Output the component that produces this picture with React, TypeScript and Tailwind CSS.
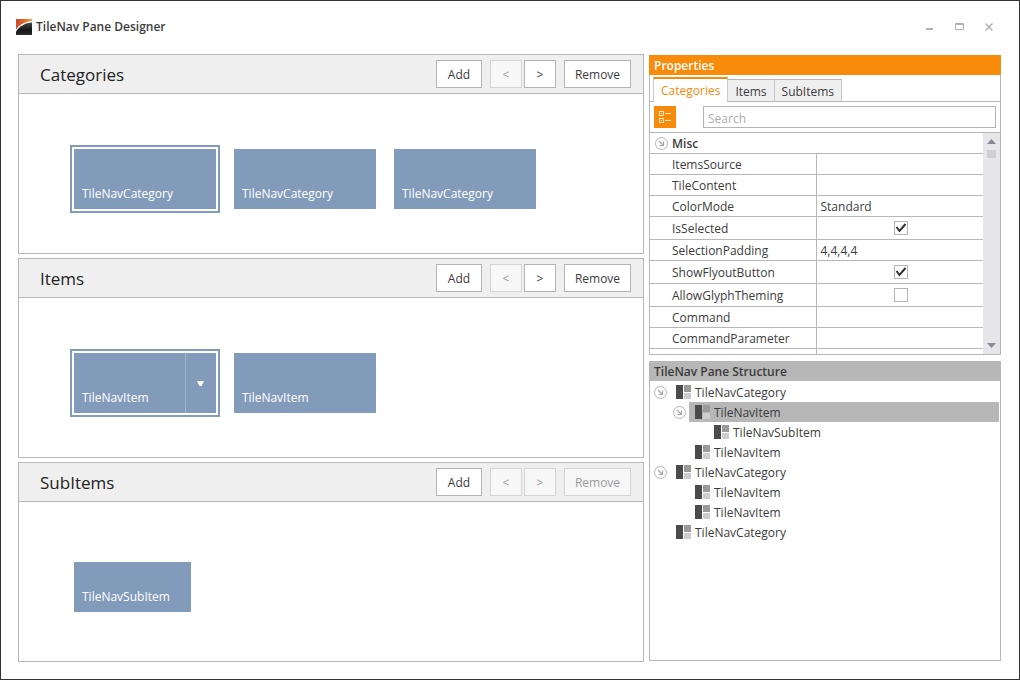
import { useState } from 'react'
import clsx from 'clsx'

interface Section {
  title: string
  tiles: string[]
  small?: boolean
  selected?: number
  flyout?: boolean
  canMoveForward: boolean
  canRemove: boolean
}

interface Property {
  name: string
  value?: string | boolean
}

interface Node {
  label: string
  children?: Node[]
  selected?: boolean
}

const sections: Section[] = [
  {
    title: 'Categories',
    tiles: ['TileNavCategory', 'TileNavCategory', 'TileNavCategory'],
    selected: 0,
    canMoveForward: true,
    canRemove: true,
  },
  {
    title: 'Items',
    tiles: ['TileNavItem', 'TileNavItem'],
    selected: 0,
    flyout: true,
    canMoveForward: true,
    canRemove: true,
  },
  {
    title: 'SubItems',
    tiles: ['TileNavSubItem'],
    small: true,
    canMoveForward: false,
    canRemove: false,
  },
]

const properties: Property[] = [
  { name: 'ItemsSource' },
  { name: 'TileContent' },
  { name: 'ColorMode', value: 'Standard' },
  { name: 'IsSelected', value: true },
  { name: 'SelectionPadding', value: '4,4,4,4' },
  { name: 'ShowFlyoutButton', value: true },
  { name: 'AllowGlyphTheming', value: false },
  { name: 'Command' },
  { name: 'CommandParameter' },
  { name: '' },
]

const structure: Node[] = [
  {
    label: 'TileNavCategory',
    children: [
      { label: 'TileNavItem', selected: true, children: [{ label: 'TileNavSubItem' }] },
      { label: 'TileNavItem' },
    ],
  },
  {
    label: 'TileNavCategory',
    children: [{ label: 'TileNavItem' }, { label: 'TileNavItem' }],
  },
  { label: 'TileNavCategory' },
]

const tabs = ['Categories', 'Items', 'SubItems']

function Logo() {
  return (
    <svg className="h-4 w-4" viewBox="0 0 16 16">
      <defs>
        <linearGradient id="logo-sky" x1="0" y1="0" x2="1" y2="0">
          <stop offset="0" stopColor="#c9472b" />
          <stop offset="0.5" stopColor="#e2682c" />
          <stop offset="1" stopColor="#f9a33c" />
        </linearGradient>
        <linearGradient id="logo-globe" x1="0" y1="0" x2="0" y2="1">
          <stop offset="0" stopColor="#4a4a4a" />
          <stop offset="0.6" stopColor="#151515" />
          <stop offset="1" stopColor="#2e2e2e" />
        </linearGradient>
      </defs>
      <rect width="16" height="16" fill="url(#logo-sky)" />
      <path d="M0 10.500C3 6 9 2.500 16 2V16H0Z" fill="#fff" />
      <path d="M0 12.500C4 7 9 4 16 3.500V16H0Z" fill="url(#logo-globe)" />
    </svg>
  )
}

function Expander() {
  return (
    <svg className="h-[13px] w-[13px]" viewBox="0 0 13 13" fill="none">
      <circle cx="6.500" cy="6.500" r="6" stroke="#b4b4b4" />
      <path d="M4 4L8.500 8.500M8.500 4.500V8.500H4.500" stroke="#a6a6a6" strokeWidth="1.200" />
    </svg>
  )
}

function TileIcon() {
  return (
    <svg className="h-[14px] w-[15px] shrink-0" viewBox="0 0 15 14" shapeRendering="crispEdges">
      <path d="M0 0H7V14H0Z" fill="#4b4b4b" />
      <path d="M8 0H15V7H8Z" fill="#9a9a9a" />
      <path d="M8 8H15V14H8Z" fill="#cdcdcd" />
    </svg>
  )
}

function ToolButton({ label, className, disabled }: { label: string; className: string; disabled?: boolean }) {
  return (
    <button
      disabled={disabled}
      className={clsx(
        'h-7 border pt-0.5',
        disabled ? 'border-[#d4d4d4] bg-[#f7f7f7] text-[#9b9b9b]' : 'border-[#b4b4b4] bg-white',
        className,
      )}
    >
      {label}
    </button>
  )
}

function SectionPanel({ section }: { section: Section }) {
  return (
    <section className="flex flex-1 flex-col border border-[#b7b7b7]">
      <header className="flex h-[39px] items-center border-b border-[#b7b7b7] bg-[#efefef] pr-3 pl-[21px]">
        <h2 className="flex-1 pt-0.5 text-[17px] text-[#222]">{section.title}</h2>
        <ToolButton label="Add" className="mr-2 w-[46px]" />
        <ToolButton label="<" className="mr-0.5 w-8" disabled />
        <ToolButton label=">" className="mr-2 w-8" disabled={!section.canMoveForward} />
        <ToolButton label="Remove" className="w-[67px]" disabled={!section.canRemove} />
      </header>
      <div className="flex flex-1 items-center gap-[18px] pt-[11px] pl-[55px]">
        {section.tiles.map((tile, index) => (
          <div
            key={index}
            className={clsx(
              'flex bg-[#839bba] text-white',
              section.small ? 'h-[50px] w-[117px]' : 'h-[60px] w-[142px]',
              section.selected === index && 'outline-2 outline-offset-2 outline-[#839bba]',
            )}
          >
            <button className="flex flex-1 items-end px-2 pb-[7px] leading-4">{tile}</button>
            {section.flyout && section.selected === index && (
              <button
                aria-label="Open flyout"
                className="flex w-[31px] items-center justify-center border-l border-[#a3b4cc] pr-0.5"
              >
                <svg className="h-[5px] w-[7px]" viewBox="0 0 7 5" fill="#fff">
                  <path d="M0 0H7L4.500 5H2.500Z" />
                </svg>
              </button>
            )}
          </div>
        ))}
      </div>
    </section>
  )
}

function PropertyValue({ property }: { property: Property }) {
  const [checked, setChecked] = useState(property.value === true)

  if (typeof property.value !== 'boolean') {
    return <>{property.value}</>
  }
  return (
    <label className="mx-auto grid h-[14px] w-[14px]">
      <input
        type="checkbox"
        aria-label={property.name}
        checked={checked}
        onChange={() => setChecked(!checked)}
        className="col-start-1 row-start-1 h-[14px] w-[14px] appearance-none border border-[#b4b4b4] bg-white"
      />
      {checked && (
        <svg className="pointer-events-none col-start-1 row-start-1 h-[14px] w-[14px]" viewBox="0 0 14 14" fill="none">
          <path d="M2.500 6L5.500 10L11.500 3" stroke="#333" strokeWidth="2" />
        </svg>
      )}
    </label>
  )
}

function PropertyGrid() {
  return (
    <div className="flex min-h-0 flex-1 border-t border-[#b7b7b7]">
      <div className="min-w-0 flex-1 overflow-hidden">
        <table className="w-full table-fixed border-separate border-spacing-0 leading-4">
          <thead>
            <tr className="h-[21px]">
              <th colSpan={2} className="border-b border-[#b7b7b7] p-0 text-left font-semibold">
                <div className="flex items-center gap-1 pl-[5px]">
                  <Expander />
                  <span className="pt-0.5">Misc</span>
                </div>
              </th>
            </tr>
          </thead>
          <tbody>
            {properties.map((property, index) => (
              <tr key={index} className={typeof property.value === 'boolean' ? 'h-[23px]' : 'h-[21px]'}>
                <td className="border-r border-b border-[#b7b7b7] p-0 pt-0.5 pl-[22px]">{property.name}</td>
                <td
                  className={clsx(
                    'border-b border-[#b7b7b7] p-0',
                    typeof property.value === 'boolean' ? 'pl-0.5' : 'pt-0.5 pl-1',
                  )}
                >
                  <PropertyValue property={property} />
                </td>
              </tr>
            ))}
          </tbody>
        </table>
      </div>
      <div className="flex w-[17px] flex-col items-center bg-[#e6e6eb] py-1.5">
        <svg className="h-[5px] w-[9px]" viewBox="0 0 9 5" fill="#868999">
          <path d="M0 5L4.500 0L9 5Z" />
        </svg>
        <div className="mt-1.5 h-2 w-[9px] bg-[#cfcfd4]" />
        <svg className="mt-auto h-[5px] w-[9px]" viewBox="0 0 9 5" fill="#868999">
          <path d="M0 0L4.500 5L9 0Z" />
        </svg>
      </div>
    </div>
  )
}

function PropertiesPanel() {
  const [activeTab, setActiveTab] = useState('Categories')

  return (
    <section className="flex min-h-0 flex-1 flex-col border border-t-0 border-[#b7b7b7]">
      <h2 className="-mx-px h-5 bg-[#f88b0a] pt-px pl-[5px] leading-5 font-semibold text-white">Properties</h2>
      <div className="flex h-[27px] items-end border-b border-[#b7b7b7] pl-[3px]">
        {tabs.map((tab) => (
          <button
            key={tab}
            onClick={() => setActiveTab(tab)}
            className={clsx(
              'border-r border-[#c9c9c9] px-[7px]',
              tab === activeTab
                ? '-mb-px h-[25px] border-t-2 border-l border-t-[#f88b0a] bg-white text-[#f88b0a]'
                : 'h-[22px] border-t border-t-[#b7b7b7] bg-[#efefef] pt-0.5',
            )}
          >
            {tab}
          </button>
        ))}
      </div>
      <div className="flex h-[30px] items-center justify-between pr-1 pl-1">
        <button aria-label="Group by category" className="flex h-[22px] w-[22px] items-center justify-center bg-[#f88b0a]">
          <svg className="h-3 w-3" viewBox="0 0 12 12" fill="none" stroke="#fde3bf" shapeRendering="crispEdges">
            <path d="M0.500 0.500H4.500V4.500H0.500ZM0.500 7.500H4.500V11.500H0.500Z" />
            <path d="M2 2.500H3M2 9.500H3M6 2.500H12M6 9.500H12" />
          </svg>
        </button>
        <input
          type="search"
          aria-label="Search"
          placeholder="Search"
          className="ml-[27px] h-[22px] min-w-0 flex-1 border border-[#b4b4b4] px-1 pt-0.5 outline-none placeholder:text-[#adadad]"
        />
      </div>
      <PropertyGrid />
    </section>
  )
}

function TreeRows({ nodes, level = 0 }: { nodes: Node[]; level?: number }) {
  return (
    <ul className={level > 0 ? 'pl-[19px]' : undefined}>
      {nodes.map((node, index) => (
        <li key={index}>
          <div className="flex h-5 items-center">
            <div className="w-5 shrink-0">
              {node.children && (
                <button aria-label="Collapse" className="block">
                  <Expander />
                </button>
              )}
            </div>
            <div className={clsx('-ml-1 mr-px flex h-5 flex-1 items-center gap-1 pl-1.5', node.selected && 'bg-[#b7b7b7]')}>
              <TileIcon />
              <span className="pt-0.5">{node.label}</span>
            </div>
          </div>
          {node.children && <TreeRows nodes={node.children} level={level + 1} />}
        </li>
      ))}
    </ul>
  )
}

function StructurePanel() {
  return (
    <section className="min-h-0 flex-1 border border-t-0 border-[#b7b7b7]">
      <h2 className="-mx-px h-5 bg-[#b7b7b7] pt-px pl-[5px] leading-5 font-semibold">TileNav Pane Structure</h2>
      <div className="pt-px pl-1">
        <TreeRows nodes={structure} />
      </div>
    </section>
  )
}

export default function App() {
  return (
    <div className="flex h-screen flex-col border border-[#333] bg-white pr-[18px] pb-[17px] pl-[17px] font-['Open_Sans',sans-serif] text-[12px] text-[#3c3c3c]">
      <header className="-ml-0.5 flex h-[53px] items-center gap-1 pb-0.5">
        <Logo />
        <h1 className="flex-1 font-semibold">TileNav Pane Designer</h1>
        <div className="flex gap-1.5 text-[#b0b0b0]">
          <button aria-label="Minimize" className="flex h-6 w-6 items-center justify-center">
            <svg className="h-[9px] w-[9px]" viewBox="0 0 9 9">
              <path d="M1 6H8V8H1Z" fill="currentColor" />
            </svg>
          </button>
          <button aria-label="Maximize" className="flex h-6 w-6 items-center justify-center">
            <svg className="h-[7px] w-[9px]" viewBox="0 0 9 7" fill="none" stroke="currentColor">
              <path d="M0.500 0.500H8.500V6.500H0.500ZM0 1.500H9" />
            </svg>
          </button>
          <button aria-label="Close" className="flex h-6 w-6 items-center justify-center">
            <svg className="h-2 w-2" viewBox="0 0 8 8" stroke="currentColor" strokeWidth="1.500">
              <path d="M0.500 0.500L7.500 7.500M7.500 0.500L0.500 7.500" />
            </svg>
          </button>
        </div>
      </header>
      <main className="grid min-h-0 flex-1 grid-cols-[1fr_352px] gap-[5px]">
        <div className="flex min-h-0 flex-col gap-1">
          {sections.map((section) => (
            <SectionPanel key={section.title} section={section} />
          ))}
        </div>
        <div className="flex min-h-0 flex-col gap-1.5 py-px">
          <PropertiesPanel />
          <StructurePanel />
        </div>
      </main>
    </div>
  )
}
